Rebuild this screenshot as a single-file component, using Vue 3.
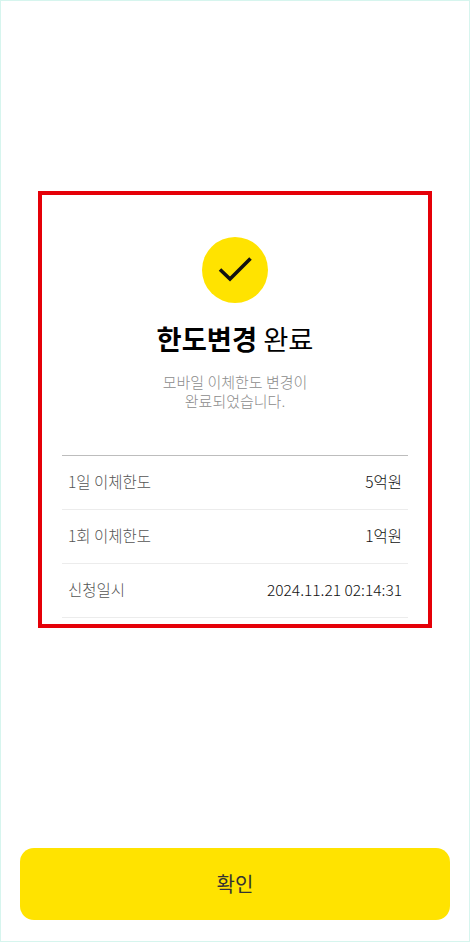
<template>
  <div class="page">
    <main class="content">
      <section class="result">
        <div class="check">
          <svg width="36" height="36" viewBox="0 0 36 36" fill="none">
            <path d="M3 17.5 L13 27 L33.5 6.5" stroke="#111" stroke-width="3.6" />
          </svg>
        </div>
        <h1><strong>한도변경</strong> 완료</h1>
        <p class="desc">모바일 이체한도 변경이<br />완료되었습니다.</p>
        <dl class="rows">
          <div class="row" v-for="row in rows" :key="row.label">
            <dt>{{ row.label }}</dt>
            <dd>{{ row.value }}</dd>
          </div>
        </dl>
      </section>
    </main>
    <div class="footer">
      <button type="button">확인</button>
    </div>
  </div>
</template>

<script setup>
const rows = [
  { label: '1일 이체한도', value: '5억원' },
  { label: '1회 이체한도', value: '1억원' },
  { label: '신청일시', value: '2024.11.21 02:14:31' }
]
</script>

<style scoped>
.page {
  display: flex;
  flex-direction: column;
  justify-content: space-between;
  height: 942px;
  box-sizing: border-box;
  border: 1px solid #d6f5ee;
  background: #fff;
  font-family: "Noto Sans CJK KR", "Noto Sans", sans-serif;
  color: #111;
}
.content {
  padding: 190px 37px 0;
}
.result {
  display: flex;
  flex-direction: column;
  align-items: center;
  box-sizing: border-box;
  height: 437px;
  padding: 42px 20px 0;
  border: 4px solid #e50008;
}
.check {
  display: flex;
  align-items: center;
  justify-content: center;
  width: 66px;
  height: 66px;
  border-radius: 50%;
  background: #ffe300;
}
h1 {
  margin: 15px 0 0;
  font-size: 27.3px;
  line-height: 40px;
  font-weight: 400;
  color: #000;
}
h1 strong {
  font-weight: 700;
}
.desc {
  margin: 14px 0 0;
  font-size: 15px;
  line-height: 19px;
  font-weight: 300;
  color: #8c8c8c;
  text-align: center;
}
.rows {
  width: 100%;
  margin: 45px 0 0;
  border-top: 1px solid #bdbdbd;
}
.row {
  display: flex;
  align-items: center;
  justify-content: space-between;
  box-sizing: content-box;
  height: 50px;
  padding: 0 6px 3px;
  border-bottom: 1px solid #ececec;
}
dt {
  font-size: 15.5px;
  font-weight: 300;
  color: #555;
}
dd {
  margin: 0;
  font-size: 15.5px;
  font-weight: 300;
  color: #111;
}
.footer {
  padding: 0 19px 21px;
}
button {
  display: block;
  width: 100%;
  height: 72px;
  padding: 0 0 2px;
  border: 0;
  border-radius: 14px;
  background: #ffe300;
  font-family: inherit;
  font-size: 20px;
  color: #333;
}
</style>
